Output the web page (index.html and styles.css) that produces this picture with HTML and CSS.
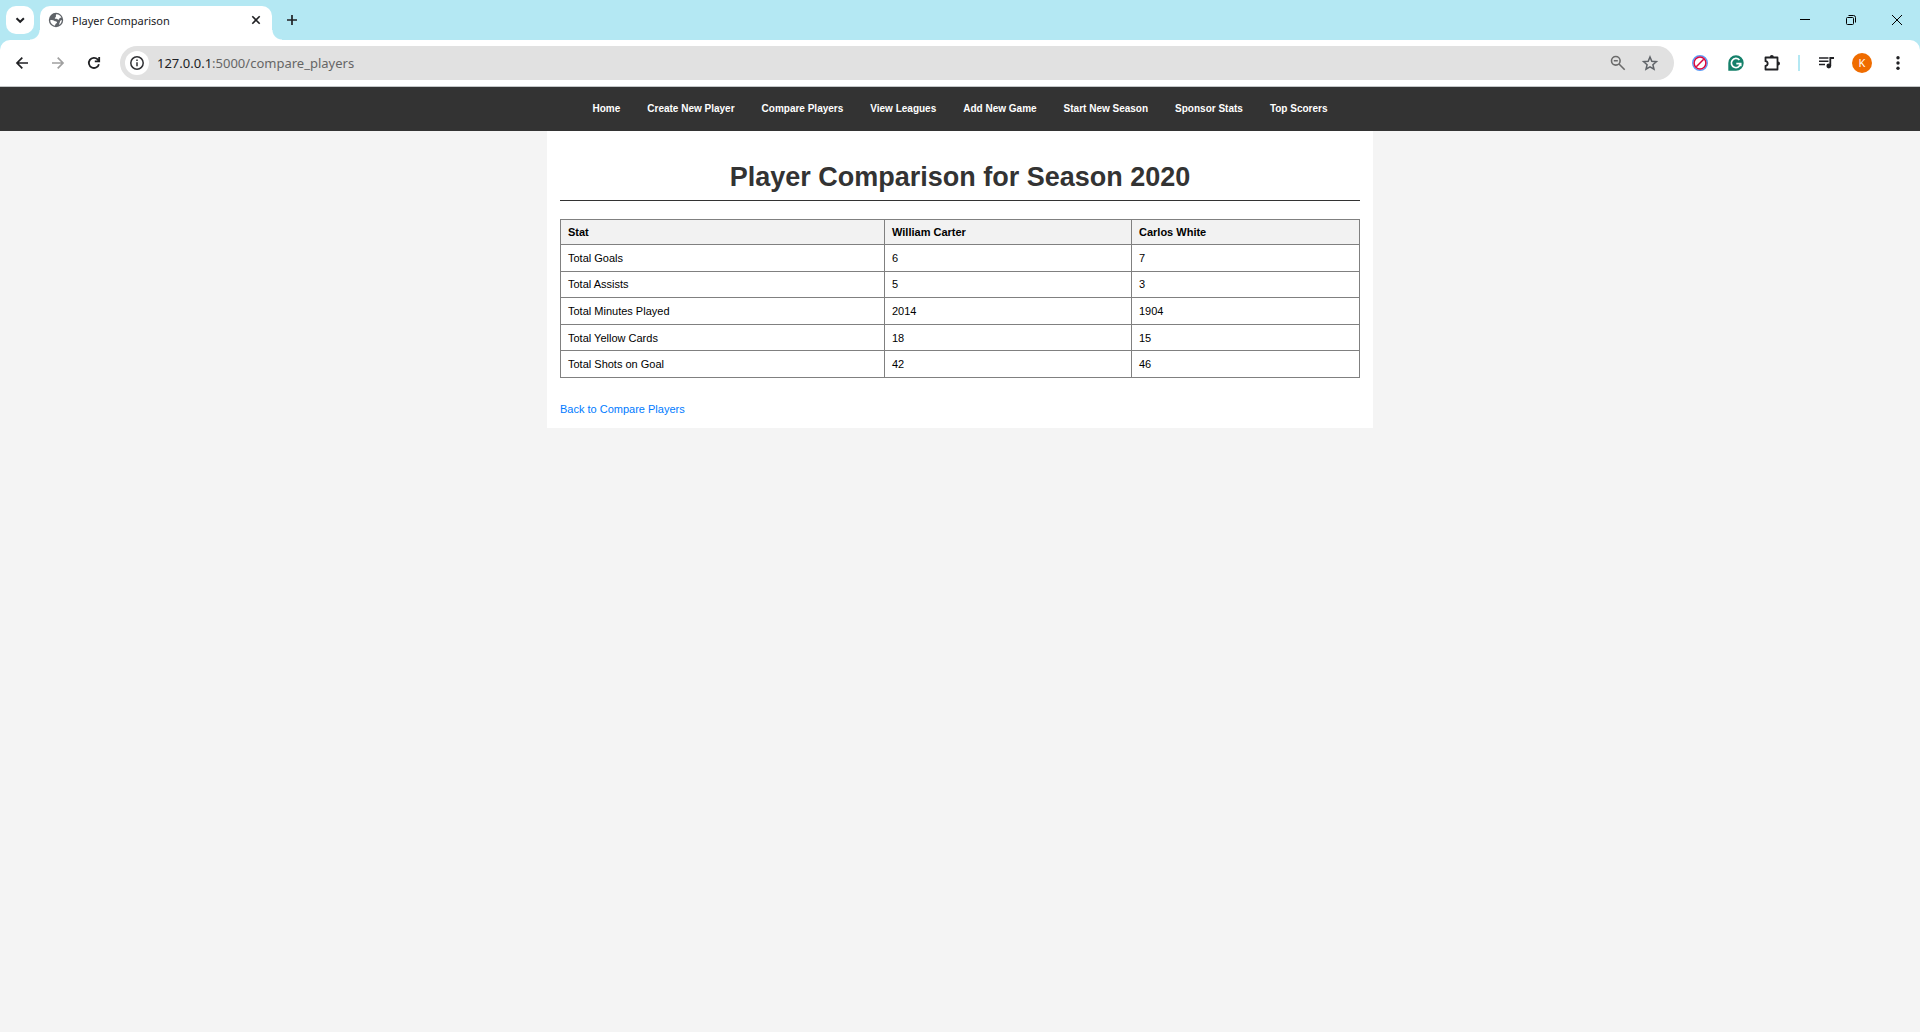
FILE: index.html
```html
<!DOCTYPE html>
<html lang="en">
<head>
<meta charset="utf-8">
<meta name="viewport" content="width=device-width, initial-scale=1">
<title>Player Comparison</title>
<link rel="stylesheet" href="styles.css">
</head>
<body>
<header class="browser">
  <div class="tabstrip">
    <button class="tab-search" aria-label="Search tabs">
      <svg width="28" height="28" viewBox="0 0 28 28"><path d="M10.500 12.200l3.700 3.600 3.700-3.600" fill="none" stroke="#202124" stroke-width="2"/></svg>
    </button>
    <div class="tab">
      <svg width="16" height="16" viewBox="0 0 16 16"><circle cx="8" cy="8" r="7.200" fill="#5f6368"/><path d="M8.300 2.300c2.400-.1 4.300 1.300 5.100 3.200-.9.300-1.500.2-1.900.8-.3.500-.2 1.300-1 1.400-.9 0-1.100-.8-1.900-.9-.8 0-1.700.3-1.800-.6 0-.8.900-.8 1.100-1.500.2-.8-.4-1.500.4-2.400zM2.200 8.200c1.500-.2 3.200-.1 4 .6.800.8 2.100.4 2.700 1.200.5.900-.5 1.400-1.200 1.800-.5.400-.3 1.300-.9 1.900C4.200 13.100 2.300 11 2.200 8.200zM13.800 8c0 1.900-.9 3.700-2.300 4.700-.5-.5-.4-1.200.1-1.800.5-.7.2-1.500.8-2.100.4-.4.900-.5 1.400-.8z" fill="#fff"/></svg>
      <span class="tab-title">Player Comparison</span>
      <button class="tab-close" aria-label="Close tab">
        <svg width="16" height="16" viewBox="0 0 16 16"><path d="M4.300 4.300l7.400 7.400M11.700 4.300l-7.400 7.400" stroke="#202124" stroke-width="1.600"/></svg>
      </button>
    </div>
    <button class="new-tab" aria-label="New tab">
      <svg width="16" height="16" viewBox="0 0 16 16"><path d="M8 3v10M3 8h10" stroke="#202124" stroke-width="1.700"/></svg>
    </button>
    <div class="window-controls">
      <button aria-label="Minimize"><svg width="12" height="12" viewBox="0 0 12 12"><path d="M1 5.500h10" stroke="#000"/></svg></button>
      <button aria-label="Restore"><svg width="12" height="12" viewBox="0 0 12 12" fill="none" stroke="#000"><rect x="1.500" y="3.500" width="7" height="7" rx="1"/><path d="M3.500 1.500H8.500a2 2 0 0 1 2 2V8.500"/></svg></button>
      <button aria-label="Close"><svg width="12" height="12" viewBox="0 0 12 12"><path d="M1 1l10 10M11 1L1 11" stroke="#000"/></svg></button>
    </div>
  </div>
  <div class="toolbar">
    <button class="tool" aria-label="Back"><svg width="20" height="20" viewBox="0 0 20 20" fill="none" stroke="#202124" stroke-width="1.700"><path d="M16 10H5M10.300 4.700L5 10l5.300 5.300"/></svg></button>
    <button class="tool" aria-label="Forward" disabled><svg width="20" height="20" viewBox="0 0 20 20" fill="none" stroke="#a0a0a0" stroke-width="1.700"><path d="M4 10h11M9.700 4.700L15 10l-5.300 5.300"/></svg></button>
    <button class="tool" aria-label="Reload"><svg width="20" height="20" viewBox="0 0 20 20" fill="none" stroke="#202124" stroke-width="1.800"><path d="M14.900 11.200A5.100 5.100 0 1 1 13.700 6.400L15 7.700M15.200 3.900V8.300H10.800"/></svg></button>
    <div class="omnibox">
      <button class="site-info" aria-label="View site information"><svg width="16" height="16" viewBox="0 0 16 16" fill="none" stroke="#303134"><circle cx="8" cy="8" r="6.200" stroke-width="1.500"/><path d="M8 7.200v4M8 4.500v1.500" stroke-width="1.500"/></svg></button>
      <p class="url"><span class="host">127.0.0.1</span>:5000/compare_players</p>
      <button class="box-icon" aria-label="Zoom"><svg width="20" height="20" viewBox="0 0 20 20" fill="none" stroke="#6b6b6b" stroke-width="1.600"><circle cx="7.800" cy="7.800" r="4.300"/><path d="M11 11l5.700 5.700M5.800 7.800h4"/></svg></button>
      <button class="box-icon" aria-label="Bookmark this tab"><svg width="20" height="20" viewBox="0 0 20 20" fill="none" stroke="#5f6368" stroke-width="1.500"><path d="M10 4l1.800 4.300 4.600.4-3.500 3 1.100 4.500-4-2.400-4 2.400 1.100-4.500-3.500-3 4.600-.4z"/></svg></button>
    </div>
    <div class="extensions">
      <button class="tool" aria-label="Blocker"><svg width="16" height="16" viewBox="0 0 16 16" fill="none"><circle cx="8" cy="8" r="7.300" fill="#fff" stroke="#5b9cf8" stroke-width="1.400"/><circle cx="8" cy="8" r="5.900" stroke="#d9083e" stroke-width="1.500"/><path d="M4.300 11.700l7.400-7.400" stroke="#d9083e" stroke-width="1.500"/></svg></button>
      <button class="tool" aria-label="Writing assistant"><svg width="16" height="16" viewBox="0 0 16 16"><path d="M8 .3a7.700 7.700 0 1 1 0 15.400H.3V8A7.700 7.700 0 0 1 8 .3z" fill="#15806a"/><path d="M11.400 5A4.600 4.600 0 1 0 12.500 8.700H8.300M10.200 8.700h2.500v2.600" fill="none" stroke="#fff" stroke-width="1.700"/></svg></button>
      <button class="tool" aria-label="Extensions"><svg width="20" height="20" viewBox="0 0 20 20"><path d="M3.500 4.500h12v12h-12v-3.700c2.900-.2 2.900-4.400 0-4.600z" fill="none" stroke="#202124" stroke-width="1.800" stroke-linejoin="round"/><path d="M7.800 4a2 2 0 0 1 4 0zM16 8.500a2 2 0 0 1 0 4z" fill="#202124"/></svg></button>
    </div>
    <span class="divider"></span>
    <div class="profile">
      <button class="tool" aria-label="Media controls"><svg width="20" height="20" viewBox="0 0 20 20"><path d="M3 5h9.500M3 8.200h9.500M3 11.500h6" stroke="#202124" stroke-width="1.600"/><path d="M14.300 13V5h3.700" stroke="#202124" stroke-width="1.800" fill="none"/><circle cx="12.800" cy="13" r="2.400" fill="#202124"/></svg></button>
      <button class="avatar" aria-label="Profile K">K</button>
      <button class="tool" aria-label="Menu"><svg width="20" height="20" viewBox="0 0 20 20" fill="#202124"><circle cx="10" cy="4.700" r="1.700"/><circle cx="10" cy="10" r="1.700"/><circle cx="10" cy="15.300" r="1.700"/></svg></button>
    </div>
  </div>
</header>
<nav class="site-nav" aria-label="Main">
  <a href="#">Home</a>
  <a href="#">Create New Player</a>
  <a href="#">Compare Players</a>
  <a href="#">View Leagues</a>
  <a href="#">Add New Game</a>
  <a href="#">Start New Season</a>
  <a href="#">Sponsor Stats</a>
  <a href="#">Top Scorers</a>
</nav>
<main class="container">
  <h1>Player Comparison for Season 2020</h1>
  <table class="stats">
    <colgroup><col class="col-stat"><col class="col-first"><col></colgroup>
    <thead>
      <tr><th scope="col">Stat</th><th scope="col">William Carter</th><th scope="col">Carlos White</th></tr>
    </thead>
    <tbody>
      <tr><td>Total Goals</td><td>6</td><td>7</td></tr>
      <tr><td>Total Assists</td><td>5</td><td>3</td></tr>
      <tr><td>Total Minutes Played</td><td>2014</td><td>1904</td></tr>
      <tr><td>Total Yellow Cards</td><td>18</td><td>15</td></tr>
      <tr><td>Total Shots on Goal</td><td>42</td><td>46</td></tr>
    </tbody>
  </table>
  <a class="back" href="#">Back to Compare Players</a>
</main>
</body>
</html>
```
FILE: styles.css
```css
* { box-sizing: border-box; }
body {
  margin: 0;
  background: #f4f4f4;
  color: #000;
  font: 11px/16px "Liberation Sans", Arial, sans-serif;
}
button {
  display: flex;
  align-items: center;
  justify-content: center;
  flex: none;
  padding: 0;
  border: 0;
  background: none;
}
svg { display: block; flex: none; }

/* Browser frame */
.browser {
  background: #b4e8f3;
  border-bottom: 1px solid #c4c7c8;
  font-family: "Noto Sans", "Open Sans", sans-serif;
}
.tabstrip {
  display: flex;
  align-items: flex-start;
  height: 40px;
  padding: 6px 0 0 6px;
}
.tab-search {
  width: 28px;
  height: 28px;
  margin-right: 6px;
  border-radius: 10px;
  background: #fff;
}
.tab {
  position: relative;
  display: flex;
  align-items: center;
  gap: 8px;
  width: 232px;
  height: 34px;
  padding: 0 8px 6px;
  border-radius: 10px 10px 0 0;
  background: #fff;
}
.tab::before,
.tab::after {
  content: "";
  position: absolute;
  bottom: 0;
  width: 10px;
  height: 10px;
}
.tab::before {
  right: 100%;
  background: radial-gradient(circle at 0 0, transparent 9px, #fff 10px);
}
.tab::after {
  left: 100%;
  background: radial-gradient(circle at 100% 0, transparent 9px, #fff 10px);
}
.tab-title { flex: 1; padding-top: 2px; font-size: 11px; color: #202124; }
.new-tab { width: 28px; height: 28px; margin-left: 6px; }
.window-controls { display: flex; margin-left: auto; }
.window-controls button { width: 46px; height: 28px; }

.toolbar {
  display: flex;
  align-items: center;
  height: 46px;
  padding: 0 4px;
  border-radius: 10px 10px 0 0;
  background: #fff;
}
.tool { width: 36px; height: 34px; }
.omnibox {
  display: flex;
  align-items: center;
  flex: 1;
  gap: 12px;
  height: 34px;
  margin-left: 8px;
  padding: 0 14px 0 5px;
  border-radius: 17px;
  background: #e1e1e1;
}
.site-info {
  width: 24px;
  height: 24px;
  margin-right: -4px;
  border-radius: 50%;
  background: #fff;
}
.url { flex: 1; margin: 0; font-size: 13px; line-height: 20px; color: #666; }
.host { color: #202124; }
.box-icon { width: 20px; height: 20px; }
.extensions { display: flex; margin-left: 8px; }
.divider { width: 2px; height: 16px; margin: 0 8px; background: #b4e8f3; }
.profile { display: flex; align-items: center; }
.avatar {
  width: 20px;
  height: 20px;
  margin: 0 8px;
  border-radius: 50%;
  background: #ef6c00;
  color: #fff;
  font: 11px/20px "Noto Sans", "Open Sans", sans-serif;
}

/* Page */
.site-nav {
  display: flex;
  flex-wrap: wrap;
  justify-content: center;
  gap: 0 27px;
  padding: 14px;
  background: #333;
  font-size: 10px;
}
.site-nav a { color: #fff; font-weight: bold; text-decoration: none; }
.container {
  max-width: 826px;
  margin: 0 auto;
  padding: 28px 13px 11px;
  background: #fff;
}
h1 {
  margin: 0 0 18px;
  padding-bottom: 5px;
  border-bottom: 1px solid #333;
  color: #333;
  font-size: 27px;
  line-height: 36px;
  text-align: center;
}
.stats {
  width: 100%;
  height: 159px;
  margin-bottom: 23px;
  border-collapse: collapse;
  table-layout: fixed;
}
.col-stat { width: 324px; }
.col-first { width: 247px; }
.stats th,
.stats td {
  padding: 4px 7px;
  border: 1px solid gray;
  text-align: left;
}
.stats th { background: #f2f2f2; }
.back { color: #007bff; text-decoration: none; }
```
